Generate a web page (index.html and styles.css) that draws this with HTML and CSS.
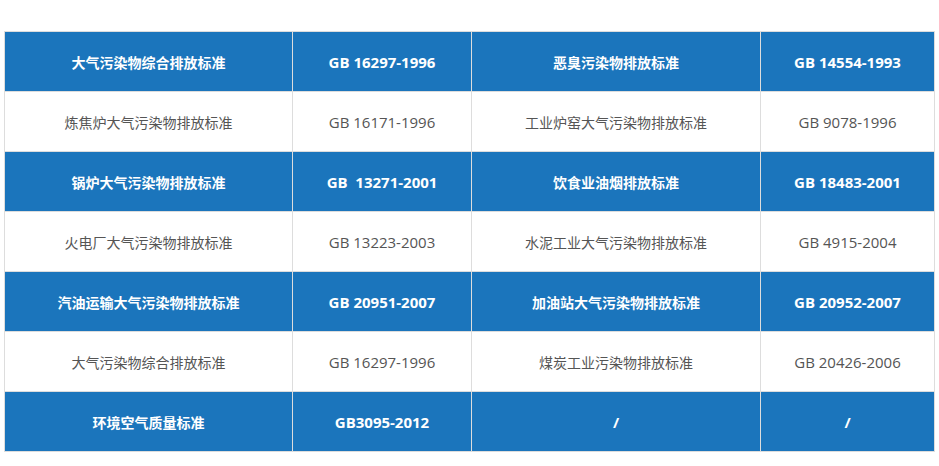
FILE: index.html
```html
<!DOCTYPE html>
<html lang="zh">
<head>
<meta charset="utf-8">
<link rel="stylesheet" href="styles.css">
</head>
<body>
<div class="wrap">
<table class="std">
<colgroup><col class="c1"><col class="c2"><col class="c3"><col class="c4"></colgroup>
<tr class="hl"><td>大气污染物综合排放标准</td><td class="code">GB 16297-1996</td><td>恶臭污染物排放标准</td><td class="code">GB 14554-1993</td></tr>
<tr><td>炼焦炉大气污染物排放标准</td><td class="code">GB 16171-1996</td><td>工业炉窑大气污染物排放标准</td><td class="code">GB 9078-1996</td></tr>
<tr class="hl"><td>锅炉大气污染物排放标准</td><td class="code">GB&nbsp; 13271-2001</td><td>饮食业油烟排放标准</td><td class="code">GB 18483-2001</td></tr>
<tr><td>火电厂大气污染物排放标准</td><td class="code">GB 13223-2003</td><td>水泥工业大气污染物排放标准</td><td class="code">GB 4915-2004</td></tr>
<tr class="hl"><td>汽油运输大气污染物排放标准</td><td class="code">GB 20951-2007</td><td>加油站大气污染物排放标准</td><td class="code">GB 20952-2007</td></tr>
<tr><td>大气污染物综合排放标准</td><td class="code">GB 16297-1996</td><td>煤炭工业污染物排放标准</td><td class="code">GB 20426-2006</td></tr>
<tr class="hl"><td>环境空气质量标准</td><td class="code">GB3095-2012</td><td class="code">/</td><td class="code">/</td></tr>
</table>
</div>
</body>
</html>
```
FILE: styles.css
```css
html, body { margin: 0; padding: 0; background: #fff; }
.wrap { padding: 31px 6px 0 4px; }
.std {
  border-collapse: collapse;
  table-layout: fixed;
  width: 930px;
  font-family: "Open Sans", "Noto Sans CJK SC", sans-serif;
  font-size: 14px;
}
.c1 { width: 288px; }
.c2 { width: 179px; }
.c3 { width: 289px; }
.c4 { width: 174px; }
.std td {
  border: 1px solid #ddd;
  height: 60px;
  padding: 0;
  text-align: center;
  vertical-align: middle;
  color: #555;
  box-sizing: border-box;
}
.std td.code { font-size: 15px; }
.std tr.hl td {
  background: #1b75bc;
  color: #fff;
  font-weight: bold;
}
```
